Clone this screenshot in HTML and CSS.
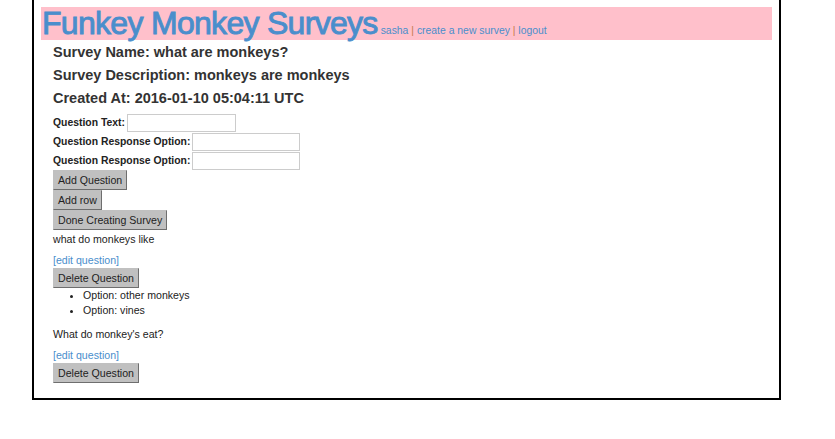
FILE: index.html
```html
<!DOCTYPE html>
<html>
<head>
<meta charset="utf-8">
<link rel="stylesheet" href="styles.css">
</head>
<body>
<div class="page">
  <div class="header">
    <span class="brand">Funkey Monkey Surveys</span>
    <span class="nav"><a href="#">sasha</a> <span class="sep">|</span> <a href="#">create a new survey</a> <span class="sep">|</span> <a href="#">logout</a></span>
  </div>
  <div class="content">
    <h4 class="meta">Survey Name: what are monkeys?</h4>
    <h4 class="meta">Survey Description: monkeys are monkeys</h4>
    <h4 class="meta">Created At: 2016-01-10 05:04:11 UTC</h4>
    <form class="qform">
      <div class="row"><label>Question Text:</label> <input type="text" class="in-q"></div>
      <div class="row"><label>Question Response Option:</label> <input type="text" class="in-o"></div>
      <div class="row"><label>Question Response Option:</label> <input type="text" class="in-o"></div>
      <div class="btnrow"><button type="button" class="btn">Add Question</button></div>
      <div class="btnrow"><button type="button" class="btn">Add row</button></div>
      <div class="btnrow"><button type="button" class="btn">Done Creating Survey</button></div>
    </form>
    <div class="question">
      <p class="qtext">what do monkeys like</p>
      <a href="#" class="edit">[edit question]</a>
      <div class="btnrow"><button type="button" class="btn">Delete Question</button></div>
      <ul class="opts">
        <li>Option: other monkeys</li>
        <li>Option: vines</li>
      </ul>
    </div>
    <div class="question">
      <p class="qtext">What do monkey's eat?</p>
      <a href="#" class="edit">[edit question]</a>
      <div class="btnrow"><button type="button" class="btn">Delete Question</button></div>
    </div>
  </div>
</div>
</body>
</html>
```

FILE: styles.css
```css
html, body {
  margin: 0;
  padding: 0;
  background: #fff;
}
body {
  font-family: "Liberation Sans", Arial, sans-serif;
  color: #222;
  font-size: 10.6px;
}
.page {
  margin: 0 54px 0 32px;
  border: 2px solid #000;
  border-top: none;
  padding: 7px 7px 15px 7px;
  width: 731px;
}
.header {
  background: #ffc0cb;
  height: 33px;
  display: flex;
  align-items: baseline;
  white-space: nowrap;
}
.brand {
  font-size: 32px;
  color: #4a8ecc;
  line-height: 33px;
  padding-left: 1px;
  letter-spacing: -0.7px;
  -webkit-text-stroke: 0.9px #4a8ecc;
}
.nav {
  font-size: 10.4px;
  margin-left: 3px;
}
.nav a {
  color: #4a8ecc;
  text-decoration: none;
}
.nav .sep {
  color: #c47a4a;
}
.content {
  padding-left: 12px;
}
.meta {
  font-size: 14.5px;
  font-weight: bold;
  color: #333;
  margin: 0;
  height: 23px;
  line-height: 23px;
}
.meta:first-child {
  margin-top: 1px;
}
.qform {
  margin-top: 3px;
}
.row {
  display: flex;
  align-items: center;
  height: 19px;
}
.row label {
  font-weight: bold;
  font-size: 10.4px;
  color: #222;
  margin-right: 2px;
}
.row input {
  height: 18px;
  box-sizing: border-box;
  border: 1px solid #ccc;
  padding: 0 2px;
  font-size: 11px;
}
.in-q { width: 109px; }
.in-o { width: 108px; }
.btnrow {
  display: flex;
}
.btn {
  font-family: "Liberation Sans", Arial, sans-serif;
  font-size: 10.6px;
  color: #222;
  background: #c0c0c0;
  border: 1px solid #c0c0c0;
  border-right-color: #6e6e6e;
  border-bottom-color: #6e6e6e;
  padding: 0 4px;
  height: 20px;
  margin: 0;
}
.qtext {
  margin: 0;
  padding-top: 1px;
  line-height: 16px;
}
.question + .question .qtext {
  padding-top: 8px;
}
.edit {
  display: block;
  color: #4a8ecc;
  text-decoration: none;
  margin-top: 7px;
  line-height: 13px;
}
.question + .question .edit {
  margin-top: 7px;
}
.question .btnrow .btn {
  margin-top: 1px;
}
.opts {
  margin: 0;
  padding-left: 30px;
  list-style: disc;
}
.opts li {
  line-height: 15px;
}
```
